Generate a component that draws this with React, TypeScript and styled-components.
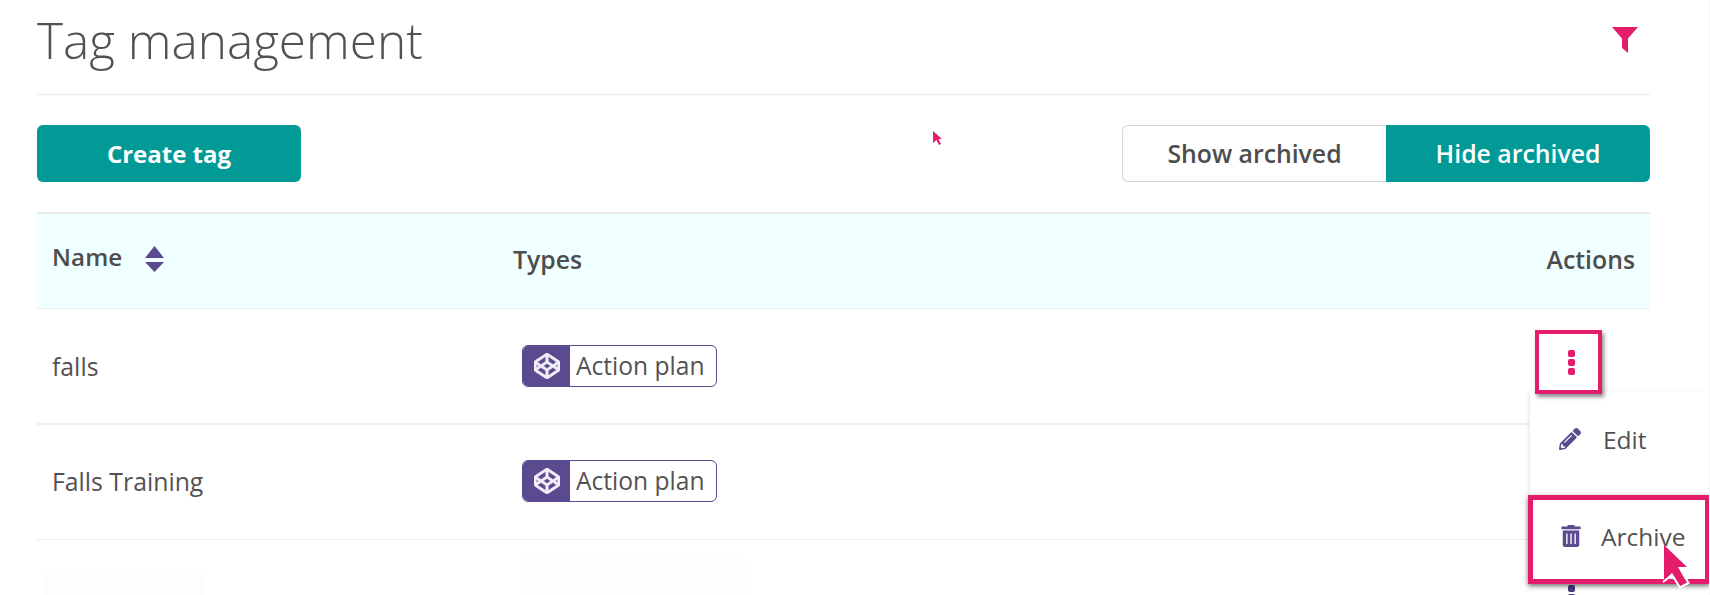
import React from "react";
import styled, { createGlobalStyle } from "styled-components";
import { FaCodepen, FaPencilAlt, FaTrashAlt } from "react-icons/fa";

const GlobalStyle = createGlobalStyle`
  html, body {
    margin: 0;
    padding: 0;
    background: #ffffff;
    overflow: hidden;
  }
  body {
    font-family: "Open Sans", sans-serif;
    color: #555152;
  }
`;

const Page = styled.div`
  position: relative;
  width: 1710px;
  height: 595px;
  padding: 0 59px 0 37px;
  border-right: 1px solid #f6f6f6;
  box-sizing: border-box;
  overflow: hidden;
`;

const TitleBar = styled.div`
  display: flex;
  align-items: center;
  justify-content: space-between;
  border-bottom: 1px solid #eaeaea;
  padding: 0 12px 14px 0;
  height: 80px;
`;

const Title = styled.h1`
  margin: 0;
  font-size: 49.5px;
  font-weight: 300;
  line-height: 78px;
  color: #555152;
`;

const FilterIcon = styled.svg`
  width: 26px;
  height: 26px;
  fill: #e31c6b;
`;

const Toolbar = styled.div`
  display: flex;
  justify-content: space-between;
  align-items: flex-start;
  padding-top: 30px;
  height: 117px;
  box-sizing: border-box;
`;

const CreateButton = styled.button`
  width: 264px;
  height: 57px;
  border: 0;
  border-radius: 6px;
  background: #029a96;
  color: #ffffff;
  font: 700 24px "Open Sans", sans-serif;
`;

const Toggle = styled.div`
  display: flex;
  height: 57px;
`;

const ToggleOption = styled.button<{ $active?: boolean }>`
  width: 264px;
  padding: 0 0 2px;
  border: ${(p) => (p.$active ? "0" : "1px solid #d6d6d6")};
  border-right: 0;
  border-radius: ${(p) => (p.$active ? "0 6px 6px 0" : "6px 0 0 6px")};
  background: ${(p) => (p.$active ? "#029a96" : "#ffffff")};
  color: ${(p) => (p.$active ? "#ffffff" : "#4d4d4d")};
  font: 600 24.8px "Open Sans", sans-serif;
`;

const Row = styled.div<{ $h?: number; $line?: number; $lift?: number }>`
  position: relative;
  display: grid;
  grid-template-columns: 476px 1fr 130px;
  align-items: center;
  height: ${(p) => p.$h ?? 116}px;
  padding-bottom: ${(p) => p.$lift ?? 0}px;
  border-bottom: ${(p) => p.$line ?? 2}px solid #eeeeee;
  box-sizing: border-box;
  font-size: 24.8px;
`;

const HeaderRow = styled(Row)`
  height: 97px;
  padding-bottom: 4px;
  background: #f0ffff;
  border-top: 2px solid #eaeaea;
  border-bottom: 1px solid #eeeeee;
  font-weight: 600;
  color: #4d4d4d;
`;

const LastRow = styled(Row)`
  height: 115px;
  border-bottom: 0;
`;

const NameCell = styled.div`
  display: flex;
  align-items: center;
  gap: 22px;
  padding-left: 15px;
`;

const HeaderName = styled(NameCell)`
  gap: 23px;
  font-size: 24.2px;
  letter-spacing: 0.1px;
`;

const ActionsCell = styled.div`
  justify-self: end;
  padding-right: 15px;
`;

const TypeTag = styled.span`
  display: inline-flex;
  align-items: stretch;
  height: 42px;
  width: 195px;
  margin-left: 9px;
  box-sizing: border-box;
  border: 1px solid #5a4a90;
  border-radius: 6px;
  overflow: hidden;
  vertical-align: middle;
`;

const TagIcon = styled.span`
  flex: 0 0 47px;
  display: flex;
  align-items: center;
  justify-content: center;
  background: #5a4a90;
  color: #f2eff8;
  font-size: 26px;

  svg {
    stroke: currentColor;
    stroke-width: 16px;
  }
`;

const TagLabel = styled.span`
  padding-left: 6px;
  line-height: 40px;
  font-size: 24.6px;
`;

const Kebab = styled.div`
  justify-self: end;
  width: 67px;
  margin-right: 48px;
  box-sizing: border-box;
  display: flex;
  flex-direction: column;
  align-items: center;
  gap: 2px;
  padding-left: 5px;
`;

const KebabBox = styled(Kebab)`
  position: relative;
  z-index: 2;
  height: 64px;
  margin-bottom: 8px;
  justify-content: center;
  border: 4px solid #e31c6b;
  background: #ffffff;
  box-shadow: 2px 3px 4px rgba(0, 0, 0, 0.45);
`;

const Dot = styled.span<{ $dark?: boolean }>`
  width: 7px;
  height: 7px;
  border-radius: 2px;
  background: ${(p) => (p.$dark ? "#4a3c7c" : "#e31c6b")};
`;

const Faded = styled.div<{ $w: number; $ml: number; $top: number }>`
  align-self: start;
  width: ${(p) => p.$w}px;
  height: 60px;
  margin-left: ${(p) => p.$ml}px;
  margin-top: ${(p) => p.$top}px;
  background: #fcfefe;
`;

const Menu = styled.div`
  position: absolute;
  z-index: 1;
  top: 82px;
  right: -60px;
  width: 180px;
  background: #ffffff;
  box-shadow: -1px 1px 4px rgba(0, 0, 0, 0.12);
  font-size: 24.5px;
  font-weight: 400;
`;

const MenuItem = styled.div`
  height: 96px;
  display: flex;
  align-items: center;
  gap: 22px;
  padding-left: 29px;
  box-sizing: border-box;
  color: #555152;
`;

const ArchiveItem = styled(MenuItem)`
  position: relative;
  height: 89px;
  width: 182px;
  margin: 8px 0 0 -2px;
  gap: 19px;
  border: 5px solid #e31c6b;
  box-shadow: 0 2px 5px rgba(0, 0, 0, 0.5);
  padding: 0 0 7px 27px;
  background: #ffffff;
`;

const MenuIcon = styled.span`
  display: flex;
  color: #5a4a90;
  font-size: 22px;
`;

const Cursor = styled.svg<{ $x: number; $y: number; $w: number; $h: number }>`
  position: absolute;
  z-index: 3;
  left: ${(p) => p.$x}px;
  top: ${(p) => p.$y}px;
  width: ${(p) => p.$w}px;
  height: ${(p) => p.$h}px;
`;

const Tag = () => (
  <TypeTag>
    <TagIcon>
      <FaCodepen />
    </TagIcon>
    <TagLabel>Action plan</TagLabel>
  </TypeTag>
);

export default function App() {
  return (
    <Page>
      <GlobalStyle />
      <TitleBar>
        <Title>Tag management</Title>
        <FilterIcon viewBox="0 0 26 26">
          <path d="M0 0H26L16 11.5V26L10 21V11.5Z" />
        </FilterIcon>
      </TitleBar>
      <Toolbar>
        <CreateButton>Create tag</CreateButton>
        <Toggle>
          <ToggleOption>Show archived</ToggleOption>
          <ToggleOption $active>Hide archived</ToggleOption>
        </Toggle>
      </Toolbar>
      <HeaderRow>
        <HeaderName>
          <span style={{ marginBottom: 5 }}>Name</span>
          <svg width="19" height="26" viewBox="0 0 19 26">
            <path d="M9.5 0 19 12H0Z M0 16H19L9.5 26Z" fill="#5a4a90" />
          </svg>
        </HeaderName>
        <div>Types</div>
        <ActionsCell>Actions</ActionsCell>
      </HeaderRow>
      <Row>
        <NameCell>falls</NameCell>
        <div>
          <Tag />
        </div>
        <KebabBox>
          <Dot />
          <Dot />
          <Dot />
        </KebabBox>
        <Menu>
          <MenuItem>
            <MenuIcon>
              <FaPencilAlt />
            </MenuIcon>
            Edit
          </MenuItem>
          <ArchiveItem>
            <MenuIcon>
              <FaTrashAlt />
            </MenuIcon>
            Archive
          </ArchiveItem>
        </Menu>
      </Row>
      <Row $h={115} $line={1} $lift={2}>
        <NameCell>Falls Training</NameCell>
        <div>
          <Tag />
        </div>
      </Row>
      <LastRow>
        <Faded $w={160} $ml={7} $top={30} />
        <Faded $w={225} $ml={7} $top={18} />
        <Kebab>
          <Dot $dark />
          <Dot $dark />
          <Dot $dark />
        </Kebab>
      </LastRow>
      <Cursor $x={933} $y={131} $w={10} $h={14} viewBox="0 0 10 14">
        <path d="M0 0 9 8H5.5L8 13 6 14 3.5 9 0 12Z" fill="#e31c6b" />
      </Cursor>
      <Cursor $x={1662} $y={544} $w={28} $h={45} viewBox="0 0 28 45">
        <path d="M2 1 25 23H16L25 39 18 42 10 29 2 37Z" fill="#e31c6b" />
        <path
          d="M1 38 10 31 18 43.5 26.5 39 18 24"
          fill="none"
          stroke="#ffffff"
          strokeWidth="2"
        />
      </Cursor>
    </Page>
  );
}
